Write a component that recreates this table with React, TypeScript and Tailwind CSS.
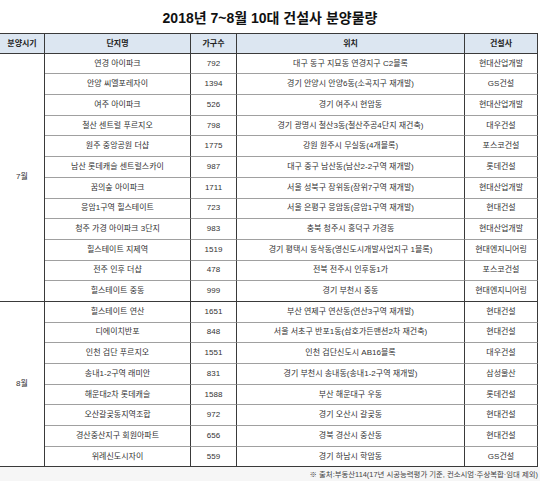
// Sales schedule table for the top-10 builders, July–August 2018.
// Excel-style sheet: light blue header, month cells spanning their rows.

type Row = {
  name: string;
  units: string;
  location: string;
  builder: string;
};

const july: Row[] = [
  { name: "연경 아이파크", units: "792", location: "대구 동구 지묘동 연경지구 C2블록", builder: "현대산업개발" },
  { name: "안양 씨엘포레자이", units: "1394", location: "경기 안양시 안양6동(소곡지구 재개발)", builder: "GS건설" },
  { name: "여주 아이파크", units: "526", location: "경기 여주시 현암동", builder: "현대산업개발" },
  { name: "철산 센트럴 푸르지오", units: "798", location: "경기 광명시 철산3동(철산주공4단지 재건축)", builder: "대우건설" },
  { name: "원주 중앙공원 더샵", units: "1775", location: "강원 원주시 무실동(4개블록)", builder: "포스코건설" },
  { name: "남산 롯데캐슬 센트럴스카이", units: "987", location: "대구 중구 남산동(남산2-2구역 재개발)", builder: "롯데건설" },
  { name: "꿈의숲 아이파크", units: "1711", location: "서울 성북구 장위동(장위7구역 재개발)", builder: "현대산업개발" },
  { name: "응암1구역 힐스테이트", units: "723", location: "서울 은평구 응암동(응암1구역 재개발)", builder: "현대건설" },
  { name: "청주 가경 아이파크 3단지", units: "983", location: "충북 청주시 흥덕구 가경동", builder: "현대산업개발" },
  { name: "힐스테이트 지제역", units: "1519", location: "경기 평택시 동삭동(영신도시개발사업지구 1블록)", builder: "현대엔지니어링" },
  { name: "전주 인후 더샵", units: "478", location: "전북 전주시 인후동1가", builder: "포스코건설" },
  { name: "힐스테이트 중동", units: "999", location: "경기 부천시 중동", builder: "현대엔지니어링" },
];

const august: Row[] = [
  { name: "힐스테이트 연산", units: "1651", location: "부산 연제구 연산동(연산3구역 재개발)", builder: "현대건설" },
  { name: "디에이치반포", units: "848", location: "서울 서초구 반포1동(삼호가든맨션2차 재건축)", builder: "현대건설" },
  { name: "인천 검단 푸르지오", units: "1551", location: "인천 검단신도시 AB16블록", builder: "대우건설" },
  { name: "송내1-2구역 래미안", units: "831", location: "경기 부천시 송내동(송내1-2구역 재개발)", builder: "삼성물산" },
  { name: "해운대2차 롯데캐슬", units: "1588", location: "부산 해운대구 우동", builder: "롯데건설" },
  { name: "오산갈곶동지역조합", units: "972", location: "경기 오산시 갈곶동", builder: "현대건설" },
  { name: "경산중산지구 회원아파트", units: "656", location: "경북 경산시 중산동", builder: "현대건설" },
  { name: "위례신도시자이", units: "559", location: "경기 하남시 학암동", builder: "GS건설" },
];

const headers = ["분양시기", "단지명", "가구수", "위치", "건설사"];

function GroupRows({ month, rows }: { month: string; rows: Row[] }) {
  return (
    <>
      <div
        className="flex items-center justify-center border-r border-b border-[#3a3a3a] text-[#333]"
        style={{ gridRow: `span ${rows.length} / span ${rows.length}` }}
      >
        {month}
      </div>
      {rows.map((row, i) => {
        // last row of a month closes with a dark rule, the rest are grey
        const bottom = i === rows.length - 1 ? "border-b-[#3a3a3a]" : "border-b-[#a0a0a0]";
        return [row.name, row.units, row.location, row.builder].map((text, c) => (
          <div
            key={`${i}-${c}`}
            className={`flex items-center justify-center whitespace-nowrap overflow-visible border-b border-r border-r-[#3a3a3a] text-[#333] ${bottom}`}
          >
            {text}
          </div>
        ));
      })}
    </>
  );
}

export default function App() {
  return (
    <div className="w-[540px] h-[482px] bg-white font-['Liberation_Sans','Noto_Sans_CJK_KR',sans-serif] overflow-hidden">
      <div className="h-[33px] flex items-center justify-center pt-[3px] text-[14px] font-bold text-[#111]">
        2018년 7~8월 10대 건설사 분양물량
      </div>
      <div className="w-[538px] grid grid-cols-[45px_146px_46px_228px_73px] auto-rows-[20.7px] text-[8px] leading-none">
        {headers.map(h => (
          <div
            key={h}
            className="h-[21px] flex items-center justify-center bg-[#dce6f1] border-t border-b border-r border-[#3a3a3a] font-bold text-[#222]"
          >
            {h}
          </div>
        ))}
        <GroupRows month="7월" rows={july} />
        <GroupRows month="8월" rows={august} />
      </div>
      <div className="h-[14px] bg-[#f6f6f6] flex items-center justify-end pr-[2px] text-[7.4px] text-[#444] leading-none">
        ※ 출처:부동산114(17년 시공능력평가 기준, 컨소시엄·주상복합·임대 제외)
      </div>
    </div>
  );
}
